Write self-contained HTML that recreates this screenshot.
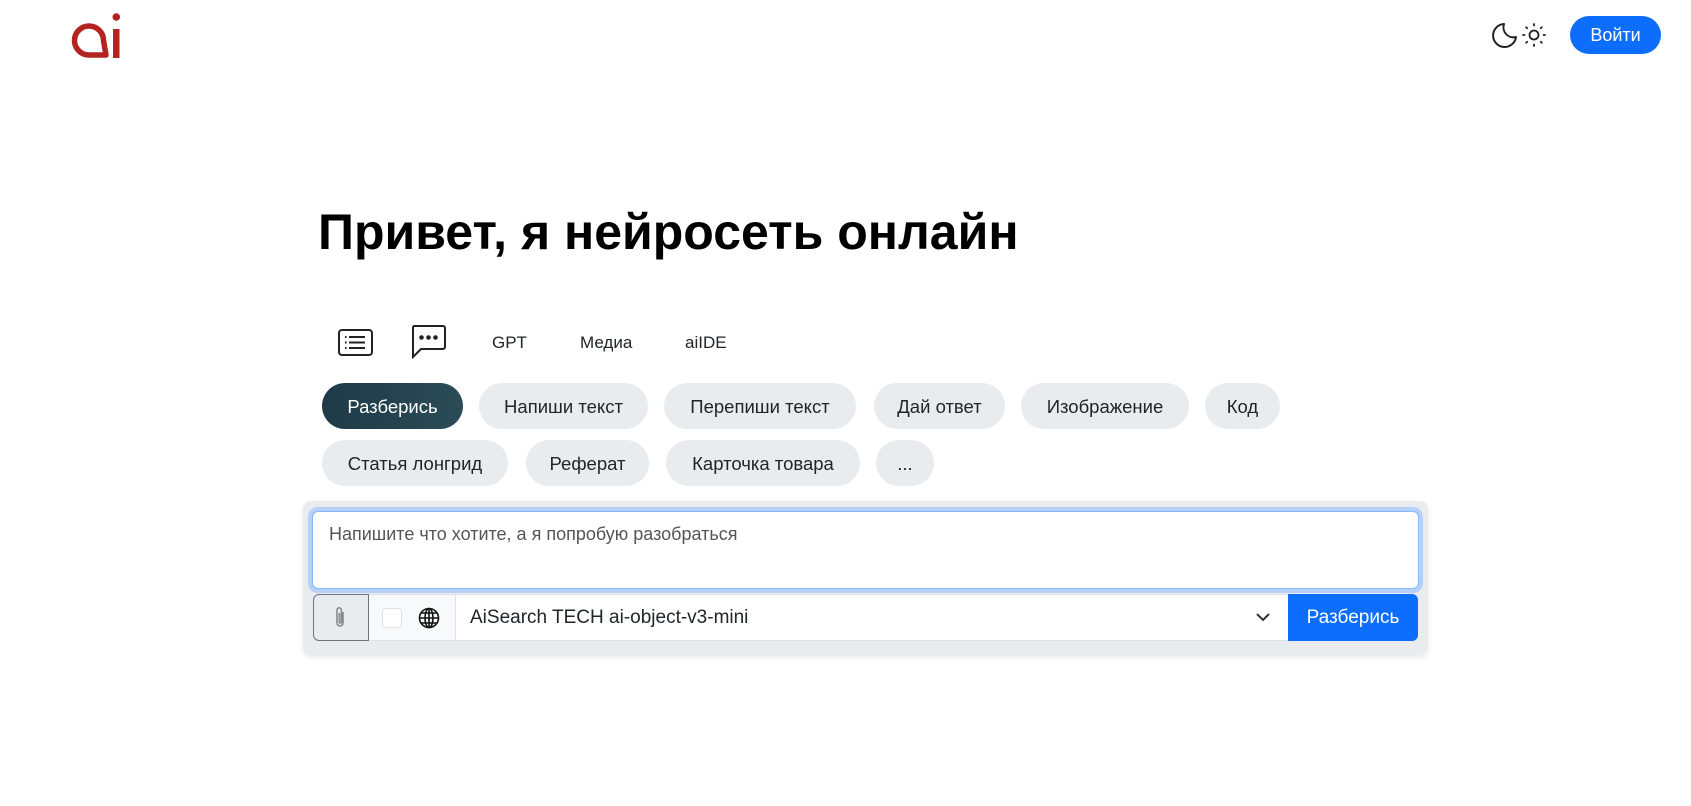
<!DOCTYPE html>
<html><head><meta charset="utf-8"><style>
*{box-sizing:border-box;margin:0;padding:0}
body{width:1691px;height:806px;background:#fff;font-family:"Liberation Sans",Arial,sans-serif;color:#212529;position:relative;overflow:hidden}
.abs{position:absolute}
h1{position:absolute;left:318px;top:202px;font-size:50px;font-weight:bold;color:#000;white-space:nowrap;line-height:60px}
.tab{position:absolute;top:333px;font-size:17px;color:#212529}
.chip{position:absolute;height:46px;border-radius:23px;background:#e9ecef;font-size:18.5px;line-height:48px;text-align:center;color:#212529;white-space:nowrap}
.chip.act{background:linear-gradient(90deg,#1e3a47,#2b4c57);color:#fff}
</style></head><body>
<svg class="abs" style="left:68px;top:10px" width="58" height="50" viewBox="0 0 58 50">
<path d="M38 45 L21 45 A14.5 14.5 0 1 1 35.5 30.5 Z" fill="none" stroke="#b3231f" stroke-width="5.5" stroke-linejoin="round"/>
<rect x="45" y="19" width="6.5" height="29" fill="#b3231f"/>
<circle cx="48.3" cy="7" r="3.8" fill="#b3231f"/>
</svg>
<svg class="abs" style="left:1490px;top:22px" width="28" height="28" viewBox="0 0 28 28"><path d="M14 2 A11.5 11.5 0 1 0 26 15 A10 10 0 0 1 14 2 Z" fill="none" stroke="#222" stroke-width="2" stroke-linejoin="round"/></svg>
<svg class="abs" style="left:1521px;top:22px" width="26" height="26" viewBox="0 0 26 26" stroke="#222" stroke-width="1.8" fill="none" stroke-linecap="round"><circle cx="13" cy="13" r="4.5"/><path d="M13 2v1.5M13 22.5v1.5M2 13h1.5M22.5 13h1.5M5.2 5.2l1 1M19.8 19.8l1 1M5.2 20.8l1-1M19.8 6.2l1-1"/></svg>
<div class="abs" style="left:1570px;top:16px;width:91px;height:38px;border-radius:19px;background:#0d6efd;color:#fff;font-size:18px;line-height:38px;text-align:center">Войти</div>
<h1>Привет, я нейросеть онлайн</h1>
<svg class="abs" style="left:338px;top:329px" width="35" height="27" viewBox="0 0 35 27" fill="none" stroke="#222" stroke-width="2"><rect x="1" y="1" width="33" height="25" rx="3"/><path d="M11 8h16M11 13.5h16M11 19h16" /><path d="M7 8h1.5M7 13.5h1.5M7 19h1.5" stroke-width="2.2"/></svg>
<svg class="abs" style="left:411px;top:325px" width="35" height="34" viewBox="0 0 35 34" fill="none" stroke="#222" stroke-width="2"><path d="M3 1h29a2 2 0 0 1 2 2v19a2 2 0 0 1-2 2H10L2 32V3a2 2 0 0 1 1-2z"/><circle cx="10.5" cy="12.5" r="1.3" fill="#222"/><circle cx="17.5" cy="12.5" r="1.3" fill="#222"/><circle cx="24.5" cy="12.5" r="1.3" fill="#222"/></svg>
<div class="tab" style="left:492px">GPT</div>
<div class="tab" style="left:580px">Медиа</div>
<div class="tab" style="left:685px">aiIDE</div>
<div class="chip act" style="left:322px;top:383px;width:141px">Разберись</div>
<div class="chip" style="left:479px;top:383px;width:169px">Напиши текст</div>
<div class="chip" style="left:664px;top:383px;width:192px">Перепиши текст</div>
<div class="chip" style="left:874px;top:383px;width:131px">Дай ответ</div>
<div class="chip" style="left:1021px;top:383px;width:168px">Изображение</div>
<div class="chip" style="left:1205px;top:383px;width:75px">Код</div>
<div class="chip" style="left:322px;top:440px;width:186px">Статья лонгрид</div>
<div class="chip" style="left:526px;top:440px;width:123px">Реферат</div>
<div class="chip" style="left:666px;top:440px;width:194px">Карточка товара</div>
<div class="chip" style="left:876px;top:440px;width:58px">...</div>
<div class="abs" style="left:303px;top:501px;width:1125px;height:154px;background:#e9ecef;border-radius:8px;box-shadow:0 2px 6px rgba(0,0,0,.1)"></div>
<div class="abs" style="left:312px;top:511px;width:1107px;height:78px;background:#fff;border:1px solid #86b7fe;border-radius:6px;box-shadow:0 0 0 4px #b6d0f7;padding:12px 16px;font-size:18px;color:#555">Напишите что хотите, а я попробую разобраться</div>
<div class="abs" style="left:313px;top:594px;width:56px;height:47px;border:1px solid #6c757d;border-radius:6px 0 0 6px;background:#e9ecef"></div>
<svg class="abs" style="left:333px;top:606px" width="14" height="24" viewBox="0 0 14 24" fill="none" stroke="#888" stroke-width="1.6"><path d="M10 6v11a3 3 0 0 1-6 0V4a2.2 2.2 0 0 1 4.4 0v12a1 1 0 0 1-2 0V7"/></svg>
<div class="abs" style="left:369px;top:594px;width:86px;height:47px;background:#f8f9fa;border-top:1px solid #dee2e6;border-bottom:1px solid #dee2e6"></div>
<div class="abs" style="left:382px;top:608px;width:20px;height:20px;border:1px solid #dee2e6;border-radius:4px;background:#fff"></div>
<svg class="abs" style="left:418px;top:607px" width="22" height="22" viewBox="0 0 22 22" fill="none" stroke="#111" stroke-width="1.6"><circle cx="11" cy="11" r="9.5"/><ellipse cx="11" cy="11" rx="4" ry="9.5"/><path d="M1.5 11h19M3 6h16M3 16h16M11 1.5v19"/></svg>
<div class="abs" style="left:455px;top:594px;width:834px;height:47px;background:#fff;border:1px solid #dee2e6;font-size:19px;line-height:46px;padding-left:14px;color:#212529">AiSearch TECH ai-object-v3-mini</div>
<svg class="abs" style="left:1256px;top:612px" width="14" height="10" viewBox="0 0 14 10" fill="none" stroke="#333" stroke-width="2"><path d="M1 2l6 6 6-6"/></svg>
<div class="abs" style="left:1288px;top:594px;width:130px;height:47px;background:#0d6efd;border-radius:0 6px 6px 0;color:#fff;font-size:19px;line-height:48px;text-align:center">Разберись</div>
</body></html>
